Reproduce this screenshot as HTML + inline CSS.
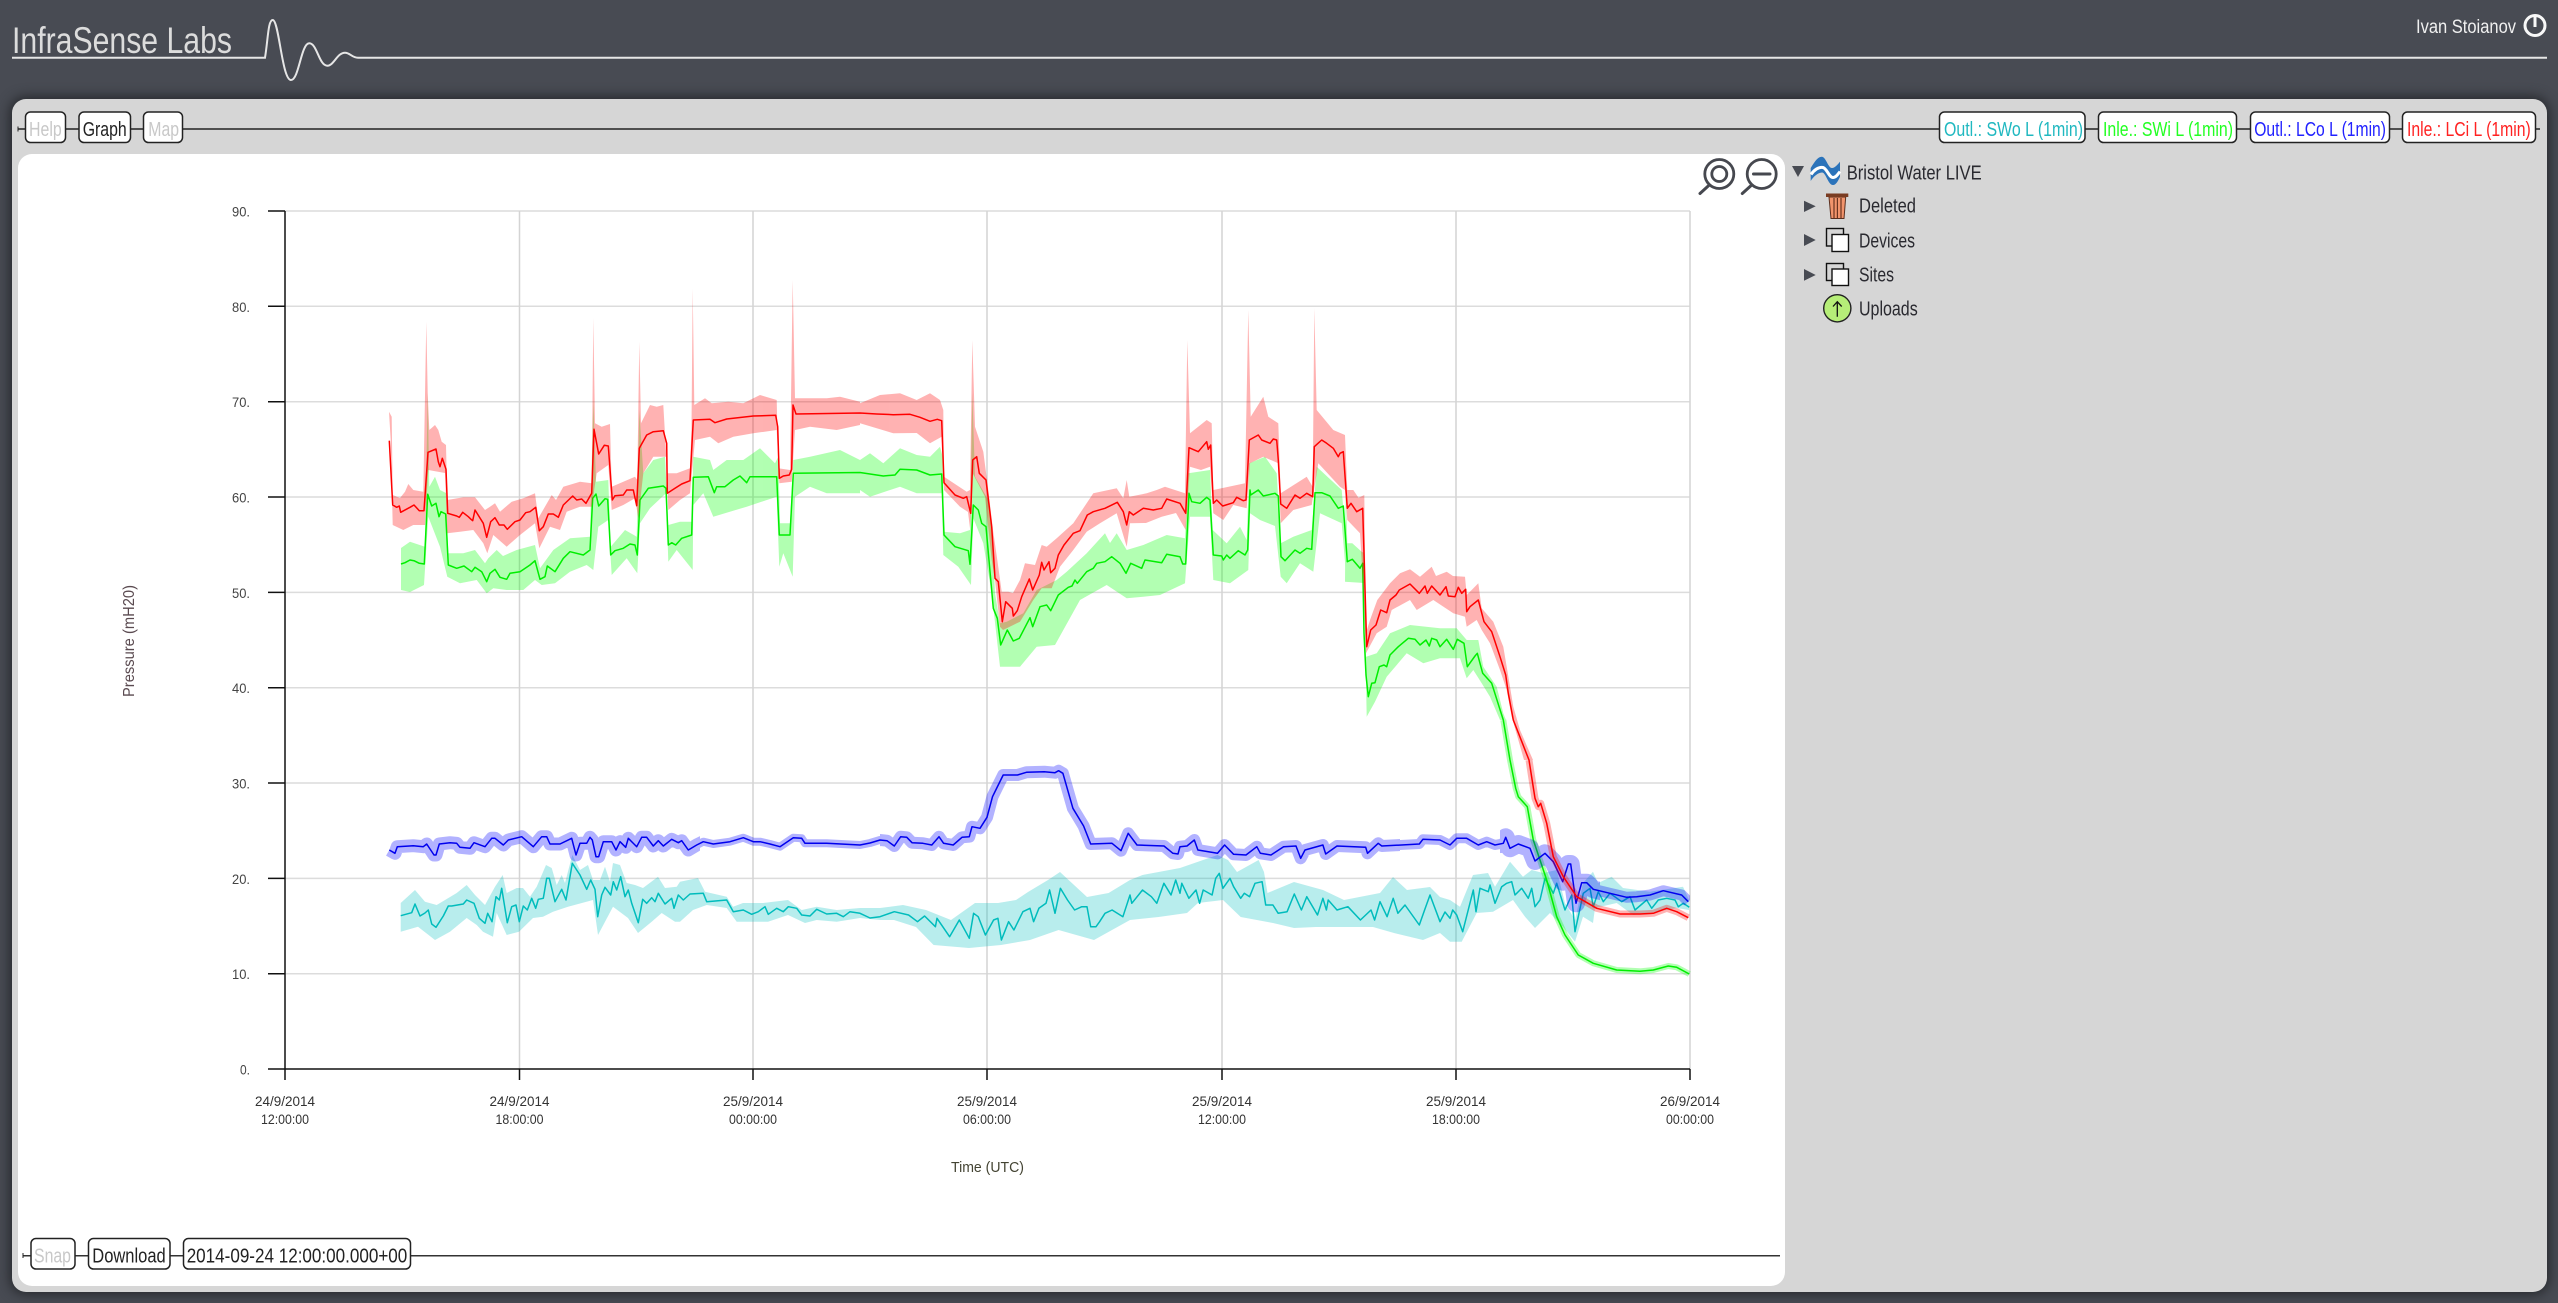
<!DOCTYPE html>
<html>
<head>
<meta charset="utf-8">
<title>InfraSense Labs</title>
<style>
html,body{margin:0;padding:0;width:2558px;height:1303px;overflow:hidden;background:#484b53}
#panel{position:absolute;left:12px;top:99px;width:2535px;height:1193px;border-radius:14px;background:#d6d6d6;box-shadow:0 0 12px 2px #24262a}
#white{position:absolute;left:18px;top:154px;width:1767px;height:1132px;border-radius:14px;background:#fff}
svg{position:absolute;left:0;top:0}
text{font-family:"Liberation Sans Narrow","Liberation Sans",sans-serif}
.b{fill:#fff;stroke:#222;stroke-width:1.5}
.t{font-size:20px;fill:#222}
.o{font-size:20px;fill:#c8c8c8}
.y{font-size:14px;fill:#444;text-anchor:end}
.x{font-size:14px;fill:#333;text-anchor:middle}
.tr{font-size:20px;fill:#2a2a30}
.l{fill:none;stroke-width:1.5;stroke-linejoin:round}
.s{fill:none;stroke-linejoin:round}
</style>
</head>
<body>
<div id="panel"></div>
<div id="white"></div>
<svg width="2558" height="1303" viewBox="0 0 2558 1303" xmlns="http://www.w3.org/2000/svg">
<defs>
<clipPath id="c1"><rect x="380" y="700" width="320" height="400"/></clipPath>
<clipPath id="c2"><rect x="700" y="700" width="180" height="400"/></clipPath>
<clipPath id="c5"><rect x="1600" y="700" width="90" height="400"/></clipPath>
<clipPath id="c6"><rect x="880" y="700" width="520" height="400"/></clipPath>
<clipPath id="c7"><rect x="1400" y="700" width="100" height="400"/></clipPath>
<clipPath id="c8"><rect x="1500" y="700" width="100" height="400"/></clipPath>
<path id="teal" d="M400.7 915.7L411.7 912.7 415 904 420 916 425 913 428.3 910 431.7 924 436 927.3 443.3 916 448.3 906 451.7 906 463.3 904 466.7 900 474 903.3 479.3 918.3 485 923.3 487.7 913.3 492 921.7 496 896.7 499.3 900 501.7 888.3 507.3 922.7 511.7 906.7 516 905 519.3 921.7 523.3 906 527.3 910 531.7 898.3 535.7 908.3 538.3 899.3 543.3 898.3 546.7 878.3 549.3 878.3 555 901.7 561.7 889.3 566 900 572.3 863.3 580 875 586.7 889.3 590.7 880 595 889.3 597.7 916.7 601.7 895 605 887.3 610.7 895 613.3 881.7 616.7 890 620.7 876.7 625 896.7 628.3 890 631.7 903.3 638.3 922.7 642.7 899.3 646.7 903.3 651.7 897.7 655 901.7 658.3 893.3 665 904 671.7 898.3 674 908.3 678.3 895 683.3 900 690 894 703.3 893.3 706.7 901.7 726.7 900 733.3 911.7 743.3 910 751.7 914.3 758.3 911.7 765 906.7 768.3 914.3 776.7 908.3 783.3 911.7 788.3 906.7 796.7 908.3 801.7 915 810 916 816.7 909.3 826.7 914 836.7 913.3 843.3 916.7 850 911.7 860 913.3 870 918 880 916.7 894.3 911.7 908.6 915 917.5 921.7 924.6 916 935.4 926.7 937 918.3 949.6 936.7 959.3 920 969.3 938.3 973.6 913.3 978.2 916.7 985.4 935 993.6 920 997.9 918.3 1001.4 940 1008.6 921.7 1013.9 930 1022.9 911.7 1030 908.3 1033.6 921.7 1038.9 908.3 1046 903.3 1049.6 890 1055 913.3 1060.4 888.3 1067.5 900 1074.6 910 1081.8 906.7 1087 906.7 1090.7 926.7 1096 926.7 1099.6 921.7 1105 913.3 1112.1 910 1122.9 916.7 1130 895 1131.8 903.3 1142.5 890 1151.4 896.7 1156.8 903.3 1163.9 883.3 1171 895 1175.7 880 1180 893.3 1181.8 883.3 1188.9 898.3 1196 890 1199.6 903.3 1203.2 890 1212.1 895 1215.7 878.3 1219.3 873.3 1222.9 888.3 1230 878.3 1233.6 886.7 1240.7 898.3 1244.3 893.3 1249.6 896.7 1255 883.3 1262.1 881.7 1265.7 905 1272.9 905 1278.2 913.3 1287.1 911.7 1294.3 894 1301.4 910 1306.8 896.7 1317.5 915 1322.9 898.3 1326.4 910 1328.2 900 1337 910 1347.9 906.7 1360.4 920 1371 910 1374.6 920 1380 901.7 1387.1 916.7 1393.2 898.3 1397.9 913.3 1405 905 1419.3 925 1424.6 910 1430 895 1440 921.7 1445 912 1450 918.3 1452.7 910 1456.7 915 1462.7 931.7 1473.3 890 1476 911.7 1480 888.3 1488.3 891.7 1490 885 1495 903.3 1501.7 886.7 1506.7 883.3 1511.7 881.7 1515 895 1521.7 888.3 1528.3 898.3 1531.7 888.3 1535 906.7 1540 900 1545 878.3 1553.3 893.3 1556.7 883.3 1565 910 1571.7 895 1575 931.7 1583.3 893.3 1590 888.3 1593.3 906.7 1598.3 891.7 1603.3 901.7 1610 893.3 1621.7 901.7 1630 896.7 1635 910 1646.7 900 1651.7 908.3 1658.3 900 1666.7 898.3 1675 900 1678.3 906.7 1683.3 903.3 1689.3 907.3"/>
<path id="blue" d="M389.3 850L395 853.3 397.3 846.7 413.3 845.7 423.3 846.7 426.7 844 434 855 436 855 439.3 844 450 842.7 456.7 843.3 460 847.3 470 848.3 474 842.7 485 846.7 491.7 838.3 495 838.3 503.3 845 508.3 840 521.7 836.7 533.3 846.7 541.7 836.7 546.7 836.7 550 844 560 844 571.7 838.3 576 855 580 843.3 586.7 843.3 590 837.3 592.3 840 596 856.7 598.7 856.7 603.3 841.7 611.7 841.7 616 850 620 841.7 625.7 847.3 628.3 838.3 636.7 846.7 641.7 837.3 646.7 837.3 653.3 846 658.3 840.7 663.3 846 671.7 839.3 678.3 842.7 681.7 840.7 688.3 850 696.7 845 703.3 841.7 713.3 844 730 841.7 743.3 837.7 753.3 841.7 760 841.7 770 844 780 846.7 793.3 837.7 801.7 838.3 805 843.3 826.7 843.3 860 845 870 843 880 840 887 840.7 894.3 846 900.7 836.7 906.8 837.3 912 842.7 922.9 843.3 931.8 845 939 836.7 943.6 843.3 953.2 845 962 837.3 969.3 836.7 972 826.7 980 828.3 987 817.3 992.5 796.7 1003.2 775 1017.5 775 1026.4 772.3 1044.3 771.7 1055 772.7 1058.6 770.7 1062.9 773.3 1072.9 808.3 1083.6 826 1090.7 844 1112 843.3 1121 850.7 1128.2 833.3 1137 845 1164 846 1172.9 853.3 1178 854 1180 846.7 1187 846 1194.3 840 1197.9 850 1217.5 853.3 1224.6 845 1233.6 854.3 1246 855 1256.8 846.7 1260.4 853.3 1271 855 1283.6 846.7 1296 846 1300.7 858.3 1305 850 1322.9 845 1325.7 854 1337 846 1365.7 847.3 1367.5 853.3 1378.2 843.3 1381.8 846 1419.3 844 1422.9 839.3 1440 840 1450 845 1456.7 838.3 1466.7 838.3 1478.3 845 1486.7 841.7 1495 845 1503.3 843.3 1505.7 837.3 1510 848.3 1518.3 844 1530 848.3 1535 861 1545 853.3 1553.3 861.7 1562.7 881.7 1568.3 864 1570.7 864 1576 903.3 1581.7 882.7 1586.7 882.7 1593.3 889.3 1610 893.3 1626.7 897.3 1636.7 896.7 1650 895 1663.3 890.7 1681.7 895 1688.3 901.7"/>
</defs>

<!-- header -->
<text x="12" y="53" font-size="37" fill="#dcdcdc" textLength="220" lengthAdjust="spacingAndGlyphs">InfraSense Labs</text>
<path d="M12 57.7H265C268 40 268 20 272.7 20C279 20 282 80 291 80C299 80 301 43.3 309.3 43.3C317 43.3 319 65.7 327.3 65.7C334 65.7 337 52.7 345 52.7C350 52.7 352 57.7 358 57.7H2547" fill="none" stroke="#e6e6e6" stroke-width="2"/>
<text x="2416" y="33" font-size="19" fill="#f0f0f0" textLength="100" lengthAdjust="spacingAndGlyphs">Ivan Stoianov</text>
<circle cx="2535" cy="25.5" r="10" fill="none" stroke="#f8f8f8" stroke-width="3"/>
<path d="M2535 16.5V27" stroke="#f8f8f8" stroke-width="3"/>

<!-- top toolbar -->
<path d="M18 129H2540" stroke="#222" stroke-width="1.5"/>
<path d="M18 126.5v5" stroke="#222" stroke-width="1"/>
<rect class="b" x="25.5" y="112" width="40" height="30.5" rx="5"/>
<rect class="b" x="79" y="112" width="51.5" height="30.5" rx="5"/>
<rect class="b" x="143.5" y="112" width="39" height="30.5" rx="5"/>
<text class="o" x="29" y="136" textLength="32.7" lengthAdjust="spacingAndGlyphs">Help</text>
<text class="t" x="82.7" y="136" textLength="44" lengthAdjust="spacingAndGlyphs">Graph</text>
<text class="o" x="148.3" y="136" textLength="30.7" lengthAdjust="spacingAndGlyphs">Map</text>
<rect class="b" x="1939.5" y="112" width="145.5" height="30.5" rx="5"/>
<rect class="b" x="2098.5" y="112" width="138" height="30.5" rx="5"/>
<rect class="b" x="2250.5" y="112" width="139" height="30.5" rx="5"/>
<rect class="b" x="2402.5" y="112" width="133" height="30.5" rx="5"/>
<text x="1944" y="136" font-size="20" fill="#20b8c0" textLength="139" lengthAdjust="spacingAndGlyphs">Outl.: SWo L (1min)</text>
<text x="2103" y="136" font-size="20" fill="#22ff22" textLength="130" lengthAdjust="spacingAndGlyphs">Inle.: SWi L (1min)</text>
<text x="2254.2" y="136" font-size="20" fill="#2222ff" textLength="131.8" lengthAdjust="spacingAndGlyphs">Outl.: LCo L (1min)</text>
<text x="2407" y="136" font-size="20" fill="#ff2222" textLength="123.7" lengthAdjust="spacingAndGlyphs">Inle.: LCi L (1min)</text>

<!-- grid -->
<g stroke="#dcdcdc" stroke-width="1.5" fill="none">
<path d="M285 211H1690M285 306.3H1690M285 401.7H1690M285 497H1690M285 592.4H1690M285 687.7H1690M285 783H1690M285 878.4H1690M285 973.7H1690"/>
<path d="M519.5 211V1069M753 211V1069M987 211V1069M1222 211V1069M1456 211V1069M1690 211V1069" stroke="#d4d4d4"/>
</g>

<!-- bands -->
<g opacity=".28" fill="#00bfbf">
<polygon points="400.7,903 415,890 425,901.7 436.7,905 456.7,893 466.7,885 475,895 485,905 495,886.7 502.7,875 506.7,893 516.7,888 523,888 530,896.7 536.7,886.7 546,865 551.7,868 556.7,885 561.7,875 565,883 572.3,855 580,870 588,865 593,880 600,880 605,866.7 610,881.7 613,863 620,865 626.7,883 635,885 643,888 658,876.7 665,888 676.7,886.7 680,881.7 698,878 705,891.7 726.7,896.7 733,906.7 743,903 763,903 788,900 801.7,910 816.7,906.7 836.7,910 860,908 860,918 836.7,921.7 816.7,920 805,923 788,915 768,921.7 753,921.7 736.7,921.7 726.7,908 706.7,905 693,910 680,921.7 675,921.7 661.7,913 651.7,921.7 638,933 628,918 613,906.7 598,935 593,900 568,906.7 553,911.7 543,916.7 533,918 519,931.7 506.7,935 496.7,913 493,936.7 483,931.7 476.7,925 466.7,918 450,931.7 435,940 418,926.7 400.7,931.7"/>
<polygon points="860,908 880,908 903,905 926,910 951,920 975,903 998,903 1016,900 1028,892 1048,880 1060,872 1087,897 1108.6,893 1130,880 1142.5,875 1158.6,872 1180,868 1217.5,855 1228,860 1237,872 1258.6,860 1264,872 1267.5,893 1294,882 1323,890 1344,900 1380,893 1393,877 1407,890 1430,887 1440,897 1450,900 1460,906.7 1473,875 1488,873 1495,886.7 1510,861.7 1523,876.7 1531.7,870 1543,873 1556.7,870 1565,903 1575,920 1583,883 1593,871.7 1598,883 1611.7,876.7 1623,888 1650,891.7 1683,886.7 1689,900 1689,910 1676.7,908 1656.7,911.7 1633,915 1616.7,903 1595,908 1593,923 1583,916.7 1575,941.7 1563,926.7 1550,913 1535,928 1525,916.7 1513,900 1493,911.7 1476.7,913 1461.7,941.7 1450,941.7 1440,933 1423,940 1394,933 1373,927 1344,927 1316,927 1294,928 1273,923 1240.7,917 1223,900 1198,903 1187,913 1158.6,917 1130,920 1094,940 1058.6,930 1030,940 1001,945 969,948 933.6,945 916,927 894,920 880,920 860,918"/>
</g>
<use href="#teal" class="l" stroke="#00bcbc"/>

<g opacity=".3" fill="#00ff00">
<polygon points="401,548 410,541.7 425,546.7 427.7,393 429.3,486.7 435,476.7 440,490 446,493 448.3,553.3 463.3,553.3 475,550 485,563.3 488.3,558.3 496.7,550 503,556 516.7,550 535,545 540,568.3 553.3,550 570,538.3 590,536.7 593.3,400 596,481.7 608.3,480 610.7,546.7 625,530 636.7,536.7 639.3,410 643.3,473.3 653.3,460 665,456.7 668.3,525 680,521.7 691.7,521.7 693.3,456.7 710,460 713.3,470 726.7,460 743.3,460 760,448.3 775,463.3 778.3,456.7 780,523.3 790,523.3 793.3,460 810,456.7 840,450 860,460 860,493.3 826.7,493.3 810,486.7 795,496.7 792.7,576.7 783.3,553.3 779.3,566.7 776.7,496.7 746.7,506.7 713.3,516.7 703.3,493.3 693.3,505 692.7,570 676.7,550 668.3,561.7 666,493.3 650,508.3 640,523.3 637.3,573.3 626.7,558.3 611.7,575 608.3,520 598.3,526.7 593.3,570 586.7,565 570,571.7 555,583.3 541.7,585 535,580 523.3,590 506.7,590 493.3,588.3 486.7,593.3 476.7,580 460,583.3 447.3,576.7 440,546.7 428.3,516.7 424,585 410,592 401,590"/>
<polygon points="860,460 870,453.3 883.3,463.3 900,448.3 916.7,455 930,456.7 940,446.7 942.7,456.7 944,531.7 960,533.3 970,530 972.3,393.3 975,476.7 988.3,500 991.7,526 995,593.3 1000,623.3 1006.7,621.7 1023.3,613.3 1036.7,590 1056.7,580 1066.7,571.7 1086.7,553.3 1105,533.3 1110,543 1116.7,533.3 1126.7,550 1143.3,545 1166.7,535 1185,538.3 1188.3,473.3 1210,470 1212.7,530 1226.7,543.3 1240,526.7 1246.7,540 1249.3,463.3 1265,456.7 1276.7,473.3 1280.7,543.3 1293.3,536.7 1311.7,530 1316.7,466.7 1341.7,490 1346.7,546.7 1360,553.3 1360,580 1346.7,581.7 1341.7,523.3 1320,513.3 1313.3,571.7 1300,563.3 1286.7,583.3 1280.7,576.7 1275,526 1260,520 1250,513.3 1248.3,570 1230,583.3 1213.3,580 1210,516.7 1190,516.7 1185,583.3 1160,595 1143.3,596.7 1126.7,598.3 1106.7,585 1080,600 1055,645 1036.7,646.7 1020,666.7 1000,666.7 991.7,593.3 983.3,543.3 973.3,518.3 971,585 958.3,566.7 943.3,555 941.7,493.3 916.7,493.3 900,486.7 870,496.7 860,490"/>
<polygon points="1345.7,488.3 1347.3,543.3 1352.3,543.3 1361.7,551.7 1364,553 1366,656.7 1376.7,653.3 1390,633.3 1410,625 1440,628.3 1456.7,628.3 1466.7,640 1478.3,640 1483.3,666.7 1496.7,686.7 1503.3,713.3 1506,720 1500,720 1490,696.7 1481.7,683.3 1473.3,670 1466.7,678.3 1460,658.3 1440,658.3 1423.3,663.3 1406.7,653.3 1386.7,676.7 1375,701.7 1366.7,716.7 1364,583 1345,581.7"/>
<path class="s" d="M1503.3 720L1510 760 1515.7 788.3 1518.3 796.7 1527.3 806.7 1533.3 840 1546.7 880 1556.7 916.7 1565 935 1578.3 955 1593.3 963.3 1616.7 970 1640 971.3 1653.3 970 1668.3 966 1676.7 967.3 1689.3 974" stroke="#00ff00" stroke-width="6"/>
</g>
<polyline class="l" stroke="#00ee00" points="401,564 405,562.7 410,560 414,560.7 419.3,563.3 424.3,564 427.7,494.3 431.7,506 436,503.3 439,516.7 441,511.7 445.7,514 448.3,565 456.7,568.3 464,566 471.7,571.7 475,567.3 481.7,571.7 486.7,581.7 490,573.3 495,569.3 500,577.3 506.7,579.3 510,573.3 520,571.7 530,565 535,560.7 540,579.3 545,576.7 547.3,566 555,571.7 563.3,558.3 570,551.7 583.3,555 590,550 592.7,498.3 596,494 598.7,506 605,498.7 607.7,499.3 610.7,555 615,550.7 623.3,548.3 630,544 635,545 637.3,555 640,500 648.3,488.3 663.3,486 666,488.3 668.3,545 671.7,542.7 675.7,545 681.7,538.3 691.7,535 693.3,477.3 708.3,476.7 714.3,492.7 716.7,486.7 725,486.7 733.3,480 740,476 746.7,482.7 750,476.7 760,476.7 776.7,476.7 779.3,535 790,535 793.3,473.3 860,472.5 883.3,476 895,475 900,469.3 916.7,470 930,475 941.7,474 944,535 955,546.7 968.3,550.7 970,564.3 973.3,505 978.3,510 981.7,523.3 986,526.7 993.3,608.3 997.3,618.3 1000.7,645 1007.3,630 1013.3,641 1019.3,638.3 1030,617.7 1032.7,626.7 1040,606.7 1046.7,605 1050.7,610.7 1058.3,595 1068.3,587.3 1072,586 1075,580 1077.3,583.3 1086.7,571.7 1093.3,568.3 1096.7,563.3 1105,561.7 1111.7,556.7 1120,563.3 1126,573.3 1130.7,563.3 1141.7,568.3 1145,560 1161.7,562.7 1166.7,554.3 1180,556.7 1182.7,564 1185.7,564 1189,493.3 1191.7,501.7 1200,503.3 1206.7,497.3 1210,500 1213.3,555 1221.7,556 1223.3,560 1226.7,555 1230,558.3 1238.3,550.7 1245,555 1247.7,550 1250,490 1250.7,495 1258.3,490 1263.3,496 1275,493.3 1278.3,496 1281,556.7 1285,560.7 1295,550 1300,553.3 1306.7,548.3 1311.7,549.3 1315,492.7 1321.7,492.7 1330,496 1338.3,508.3 1343.3,506 1347.3,561.7 1352.3,559.3 1360,568.3 1362.7,563.3 1364,633 1366,675 1368.3,696.7 1371.7,683.3 1375,682.7 1379.3,666.7 1384,665 1386.7,666.7 1390,655 1398.3,646.7 1408.3,638.3 1415,639.3 1420,645 1426,640 1429.3,646 1431.7,638.3 1436.7,640 1440,646.7 1446.7,639.3 1453.3,649.3 1457.3,639.3 1464,643.3 1467.3,666.7 1475,656 1477.3,653.3 1482.7,673.3 1491.7,683.3 1503.3,720 1510,760 1515.7,788.3 1518.3,796.7 1527.3,806.7 1533.3,840 1546.7,880 1556.7,916.7 1565,935 1578.3,955 1593.3,963.3 1616.7,970 1640,971.3 1653.3,970 1668.3,966 1676.7,967.3 1689.3,974"/>

<g><g clip-path="url(#c1)"><use href="#blue" class="s" stroke="#0000ff" stroke-opacity=".3" stroke-width="13"/></g>
<g clip-path="url(#c2)"><use href="#blue" class="s" stroke="#0000ff" stroke-opacity=".3" stroke-width="8"/></g>
<g clip-path="url(#c6)"><use href="#blue" class="s" stroke="#0000ff" stroke-opacity=".3" stroke-width="12"/></g>
<g clip-path="url(#c7)"><use href="#blue" class="s" stroke="#0000ff" stroke-opacity=".3" stroke-width="10"/></g>
<g clip-path="url(#c8)"><use href="#blue" class="s" stroke="#0000ff" stroke-opacity=".3" stroke-width="18"/></g>
<g clip-path="url(#c5)"><use href="#blue" class="s" stroke="#0000ff" stroke-opacity=".3" stroke-width="11"/></g></g>
<use href="#blue" class="l" stroke="#0000ee"/>

<g opacity=".3" fill="#ff0000">
<polygon points="389,411.7 391.7,416.7 392.7,495 400,498 405,491.7 408.3,484 413.3,490 423.3,491.7 426.3,321.7 427.7,393 429.3,430 435,425 438.3,430 441.7,441.7 446,445 447.3,500 463.3,497.3 475,497.3 485,510 490,506.7 495,503.3 500,511.7 511.7,501.7 523.3,498.3 535,493.3 538.3,518.3 551.7,495 556,500 563.3,486.7 580,481.7 591.7,483.3 593.3,318.3 595,423.3 601.7,426.7 610,424 611.7,486.7 623.3,481.7 635,476.7 637.3,480 639.3,341.7 641,423.3 650,405 656.7,406.7 663.3,405 667.3,473.3 676.7,473.3 690,468.3 691.5,427 692.7,288.3 694.3,405 705,398.3 711.7,403.3 728.3,401.7 743.3,403.3 760,395 776.7,400 778.3,468.3 790,470 792.7,280 795,398.3 810,398.3 826.7,398.3 840,396.7 860,401.7 860,425 836.7,430 810,426.7 795,430 791.7,481.7 779.3,483.3 776.7,430 753.3,433.3 733.3,436.7 718.3,443.3 710,436.7 695,440 690,493.3 680,500 668.3,510 666,456.7 653.3,456.7 643.3,473.3 638.3,518.3 635,498.3 623.3,505 611.7,510 608.3,465 596.7,473.3 591.7,506.7 580,506.7 566.7,511.7 560,530 550,526.7 539.3,548.3 535,523.3 520,535 506.7,546.7 493.3,535 487.3,553.3 483.3,543.3 473.3,530 460,531.7 447.3,533.3 445,473 428.3,470 425,525 413.3,525 403.3,530 392.7,525 390.7,440"/>
<polygon points="860,403.3 880,395 900,393.3 916.7,400 930,393.3 940,400 943.3,410 944,476.7 966.7,491.7 970,490 972.3,340 975,426.7 983.3,451.7 988.3,490 993,530 997.3,560 1001.7,591.7 1008.3,591.7 1013,593 1020,580 1025,563.3 1035,565 1041.7,545 1046.7,546.7 1056.7,538.3 1073.3,523.3 1083.3,508.3 1093.3,493.3 1116.7,488.3 1123.3,498.3 1126.7,480 1129.3,496.7 1146.7,493.3 1156.7,490 1165,486.7 1185,493.3 1187.3,340 1190,433.3 1206.7,420 1211.7,423.3 1213.3,490 1245,483.3 1248.3,310 1250.7,416.7 1263.3,396.7 1268.3,416.7 1278.3,423.3 1280.7,493.3 1306.7,476.7 1312.7,486.7 1314.3,308.3 1316.7,410 1333.3,430 1345,435 1347.3,490 1353.3,490 1360,500 1360,533.3 1347.3,520 1345,490 1340,486.7 1318.3,463.3 1311.7,505 1293.3,510 1280.7,523.3 1278.3,463.3 1263.3,456.7 1250,463.3 1246.7,508.3 1233.3,505 1223.3,520 1213.3,513.3 1210,466.7 1201,470 1190,466.7 1185.7,530 1176,513 1161.7,516.7 1146,523 1130,523.3 1126.7,546.7 1116.7,513.3 1100,523.3 1086.7,531.7 1073.3,550 1060,566.7 1051.7,588.3 1041.7,588.3 1033.3,600 1020,621.7 1013.3,625 1003,630 1000,626.7 995,580 991.7,560 985,496.7 972.7,473.3 970,528.3 968,512 960,506.7 944,490 941.7,436.7 930,443.3 916.7,433 893.3,433.3 876.7,428.3 860,423.3"/>
<polygon points="1358,498 1364.3,495 1366,633 1370,620 1377.3,600 1390,583.3 1400,573.3 1410,569.3 1420,576.7 1431.7,566.7 1436,576 1446.7,571.7 1453,576 1465,576.7 1466.7,595 1478.3,583.3 1481.7,608.3 1493.3,621.7 1503.3,646.7 1506.7,666.7 1513.3,706.7 1520,730 1533,760 1524,760 1511.7,716.7 1506.7,690 1500,670 1490,643.3 1481.7,630 1476.7,620 1466.7,626.7 1465,616.7 1453.3,613.3 1433.3,600 1416.7,610 1410,600 1391.7,610 1386.7,626.7 1376.7,633.3 1366,653.3 1364,600 1360,533"/>
<path class="s" d="M1529 760L1535 798.3 1538.3 806.7 1540.7 803.3 1546.7 823.3 1553.3 856.7 1563.3 876.7 1576.7 896.7 1596.7 908.3 1620 914 1640 914 1653.3 913.3 1666.7 908.3 1676.7 911.7 1688.3 917.7" stroke="#ff0000" stroke-width="7"/>
</g>
<polyline class="l" stroke="#ff0000" points="389.3,440.7 392.7,505 396.7,507.3 399.3,506 400.7,512.3 410,507.3 414,505 419.3,510.7 424,510.7 428,452.3 436,449 438.3,461.7 440,466.7 442.3,458.3 446,469.3 447.7,513.3 456.7,516 459.3,517.3 462.7,512.3 468.3,516.7 471,519.3 472.7,520.7 475,510 483.3,523.3 486.7,537.3 490.7,521.7 495,517.7 499.3,525 504,525 507.3,529.3 515,521.7 520,520 525.7,512.7 530,511.7 535.7,507.3 539.3,530.7 543.3,526.7 548.3,514 553.3,514 558.3,517.3 563.3,505 572.7,496 576.7,500 581.7,499 586,503.3 591.7,493.3 594,429.3 598.7,454 604.3,445.3 608.3,446 612.3,500 615,495.7 623.3,495 626.7,490 633.3,490 636.7,505.7 639.3,448.3 646.7,435 653.3,431.7 663.3,430.7 666.7,443.3 667.3,493.3 675,488.3 681.7,484 690,480.7 693.3,420 710,419.3 715,422.7 726.7,419 753.3,416 775.7,415.3 777.7,426.7 779.3,478.3 783.3,476 789.3,475 791.7,469.3 793,405 796,414 860,413 876.7,414 893.3,414.7 910,414.3 920,417.3 930,421.3 937.3,419.3 941.7,420.7 944,482.7 955,495 963.3,498.3 966.7,496.7 970.7,513.3 972.7,460 976.7,456.7 979.3,473.3 986,480 991.7,526.7 995,578.3 998.3,581.7 1002.3,621.7 1005.7,601.7 1012.3,608.3 1013.3,616 1017.3,610.7 1021.7,596.7 1029.3,579 1032.7,590 1039.3,575 1041.7,562.3 1044,570 1049,561.7 1050.7,572.7 1055,568.3 1058.3,555 1064,545 1073.3,533.3 1080,530.7 1087.3,515 1093.3,511.7 1105,508.3 1117.3,502.3 1123.3,511.7 1126.7,525 1129.3,511.7 1133.3,515 1143.3,508.3 1153.3,510 1161.7,508.3 1166.7,499 1180,503.3 1185.7,513.3 1189,447.7 1198.3,451.7 1206.7,441.7 1208.3,449.3 1210.7,445 1213.3,503.3 1216.7,500 1222.7,506 1233.3,502.7 1236.7,497.3 1243.3,500.7 1246,500 1249.3,440 1258.3,435 1261.7,440 1270,443.3 1273.3,439 1276.7,440 1278.3,460 1280.7,504 1286.7,508.3 1295,495 1300,498.3 1306.7,493.3 1312.7,496.7 1314.3,446.7 1321.7,440 1326.7,443.3 1333.3,448.3 1338.3,456.7 1340,453.3 1343.3,451.7 1347.3,508.3 1351,503.3 1356.7,511.7 1362.7,508.3 1366.7,646.7 1370.7,630 1376,625 1380.7,610 1386.7,612.7 1390,600 1396,595 1399.3,590 1410,584 1419.3,593.3 1425,586 1427.3,593.3 1431.7,586 1440,595 1446,586.7 1448.3,596 1455,596.7 1458.3,587.3 1461.7,593.3 1465.7,589.3 1466.7,611.7 1470,606.7 1478.3,600 1484,621.7 1491.7,631.7 1500,656.7 1505.7,675 1508.3,693.3 1513.3,720 1529,760 1535,798.3 1538.3,806.7 1540.7,803.3 1546.7,823.3 1553.3,856.7 1563.3,876.7 1576.7,896.7 1596.7,908.3 1620,914 1640,914 1653.3,913.3 1666.7,908.3 1676.7,911.7 1688.3,917.7"/>

<!-- axes -->
<g stroke="#111" stroke-width="1.5" fill="none">
<path d="M285 211V1080"/>
<path d="M268 1069H1690"/>
<path d="M268 211H285M268 306.3H285M268 401.7H285M268 497H285M268 592.4H285M268 687.7H285M268 783H285M268 878.4H285M268 973.7H285"/>
<path d="M519.5 1069V1080M753 1069V1080M987 1069V1080M1222 1069V1080M1456 1069V1080M1690 1069V1080"/>
</g>
<g>
<text class="y" x="250" y="216.5" textLength="18" lengthAdjust="spacingAndGlyphs">90.</text>
<text class="y" x="250" y="311.8" textLength="18" lengthAdjust="spacingAndGlyphs">80.</text>
<text class="y" x="250" y="407.2" textLength="18" lengthAdjust="spacingAndGlyphs">70.</text>
<text class="y" x="250" y="502.5" textLength="18" lengthAdjust="spacingAndGlyphs">60.</text>
<text class="y" x="250" y="597.9" textLength="18" lengthAdjust="spacingAndGlyphs">50.</text>
<text class="y" x="250" y="693.2" textLength="18" lengthAdjust="spacingAndGlyphs">40.</text>
<text class="y" x="250" y="788.5" textLength="18" lengthAdjust="spacingAndGlyphs">30.</text>
<text class="y" x="250" y="883.9" textLength="18" lengthAdjust="spacingAndGlyphs">20.</text>
<text class="y" x="250" y="979.2" textLength="18" lengthAdjust="spacingAndGlyphs">10.</text>
<text class="y" x="250" y="1074.5" textLength="10" lengthAdjust="spacingAndGlyphs">0.</text>
</g>
<g>
<text class="x" x="285" y="1106" textLength="60" lengthAdjust="spacingAndGlyphs">24/9/2014</text><text class="x" x="285" y="1124" textLength="48" lengthAdjust="spacingAndGlyphs">12:00:00</text>
<text class="x" x="519.5" y="1106" textLength="60" lengthAdjust="spacingAndGlyphs">24/9/2014</text><text class="x" x="519.5" y="1124" textLength="48" lengthAdjust="spacingAndGlyphs">18:00:00</text>
<text class="x" x="753" y="1106" textLength="60" lengthAdjust="spacingAndGlyphs">25/9/2014</text><text class="x" x="753" y="1124" textLength="48" lengthAdjust="spacingAndGlyphs">00:00:00</text>
<text class="x" x="987" y="1106" textLength="60" lengthAdjust="spacingAndGlyphs">25/9/2014</text><text class="x" x="987" y="1124" textLength="48" lengthAdjust="spacingAndGlyphs">06:00:00</text>
<text class="x" x="1222" y="1106" textLength="60" lengthAdjust="spacingAndGlyphs">25/9/2014</text><text class="x" x="1222" y="1124" textLength="48" lengthAdjust="spacingAndGlyphs">12:00:00</text>
<text class="x" x="1456" y="1106" textLength="60" lengthAdjust="spacingAndGlyphs">25/9/2014</text><text class="x" x="1456" y="1124" textLength="48" lengthAdjust="spacingAndGlyphs">18:00:00</text>
<text class="x" x="1690" y="1106" textLength="60" lengthAdjust="spacingAndGlyphs">26/9/2014</text><text class="x" x="1690" y="1124" textLength="48" lengthAdjust="spacingAndGlyphs">00:00:00</text>
</g>
<text x="987.5" y="1172" font-size="15" fill="#443" text-anchor="middle" textLength="73" lengthAdjust="spacingAndGlyphs">Time (UTC)</text>
<text transform="translate(134 697) rotate(-90)" font-size="16" fill="#5a4a50" textLength="112" lengthAdjust="spacingAndGlyphs">Pressure (mH20)</text>

<!-- bottom toolbar -->
<path d="M23 1255.7H1780" stroke="#333" stroke-width="1.5"/>
<path d="M23 1253v5" stroke="#222" stroke-width="1"/>
<rect class="b" x="31" y="1238.5" width="44" height="30.5" rx="5"/>
<rect class="b" x="88.5" y="1238.5" width="81.5" height="30.5" rx="5"/>
<rect class="b" x="183.5" y="1238.5" width="227" height="30.5" rx="5"/>
<text class="o" x="34" y="1262.7" textLength="37" lengthAdjust="spacingAndGlyphs">Snap</text>
<text class="t" x="92.3" y="1262.7" textLength="73.4" lengthAdjust="spacingAndGlyphs">Download</text>
<text class="t" x="186.7" y="1262.7" textLength="220.6" lengthAdjust="spacingAndGlyphs">2014-09-24 12:00:00.000+00</text>

<!-- zoom icons -->
<g fill="none" stroke="#46484f">
<circle cx="1719.3" cy="174" r="14.5" stroke-width="2.8"/>
<circle cx="1719.3" cy="174" r="7.5" stroke-width="2.8"/>
<path d="M1709.3 185L1700 193.5" stroke-width="3" stroke-linecap="round"/>
<circle cx="1761.7" cy="174" r="14.5" stroke-width="2.8"/>
<path d="M1753.5 174H1770" stroke-width="3" stroke-linecap="round"/>
<path d="M1751.7 185L1742.3 193.5" stroke-width="3" stroke-linecap="round"/>
</g>

<!-- tree -->
<polygon points="1792,166 1804,166 1798,177" fill="#484b53"/>
<polygon points="1804,200.7 1804,212 1815.7,206.3" fill="#484b53"/>
<polygon points="1804,234 1804,246 1815.7,240" fill="#484b53"/>
<polygon points="1804,269 1804,280.7 1815.7,275" fill="#484b53"/>
<path d="M1810.7 168C1815 161 1818 156.7 1821.7 156.7C1826 156.7 1828 168 1832 168C1835 168 1838 164 1840 161.7V176.7C1838 181 1836 185 1833 185C1828 185 1826 172.5 1822 172.5C1818 172.5 1813 177 1810.7 181Z" fill="#2b73ba"/>
<path d="M1811 174.5C1814 170 1819 166.5 1823 167.5C1827 168.5 1829 177.5 1833 177.5C1836 177.5 1838 174 1840 171.5" fill="none" stroke="#fff" stroke-width="3"/>
<text class="tr" x="1846.7" y="179.3" textLength="135" lengthAdjust="spacingAndGlyphs">Bristol Water LIVE</text>
<polygon points="1829,197 1845.7,197 1844,218.5 1831,218.5" fill="#f2946c" stroke="#5a3020" stroke-width="1"/>
<rect x="1826" y="193.5" width="22.3" height="3.5" fill="#7a3c22"/>
<path d="M1834 198V218M1837.4 198V218M1841 198V218" stroke="#6a3420" stroke-width="1.2"/>
<text class="tr" x="1859" y="212.7" textLength="57" lengthAdjust="spacingAndGlyphs">Deleted</text>
<rect x="1826.5" y="228.5" width="17" height="17.5" fill="none" stroke="#111" stroke-width="1.4"/>
<rect x="1832" y="234.5" width="16.5" height="17" fill="#fff" stroke="#111" stroke-width="1.4"/>
<text class="tr" x="1859" y="247.7" textLength="56" lengthAdjust="spacingAndGlyphs">Devices</text>
<rect x="1826.5" y="263.5" width="17" height="17" fill="none" stroke="#111" stroke-width="1.4"/>
<rect x="1832" y="269" width="16.5" height="16.5" fill="#fff" stroke="#111" stroke-width="1.4"/>
<text class="tr" x="1859" y="281.7" textLength="35" lengthAdjust="spacingAndGlyphs">Sites</text>
<circle cx="1837.3" cy="308.3" r="13.6" fill="#b6ee78" stroke="#222" stroke-width="1.4"/>
<path d="M1837.3 316.7V301.7M1833 306.5L1837.3 301.7 1841.7 306.5" fill="none" stroke="#111" stroke-width="1.3"/>
<text class="tr" x="1859" y="315.7" textLength="58.7" lengthAdjust="spacingAndGlyphs">Uploads</text>
</svg>
</body>
</html>
